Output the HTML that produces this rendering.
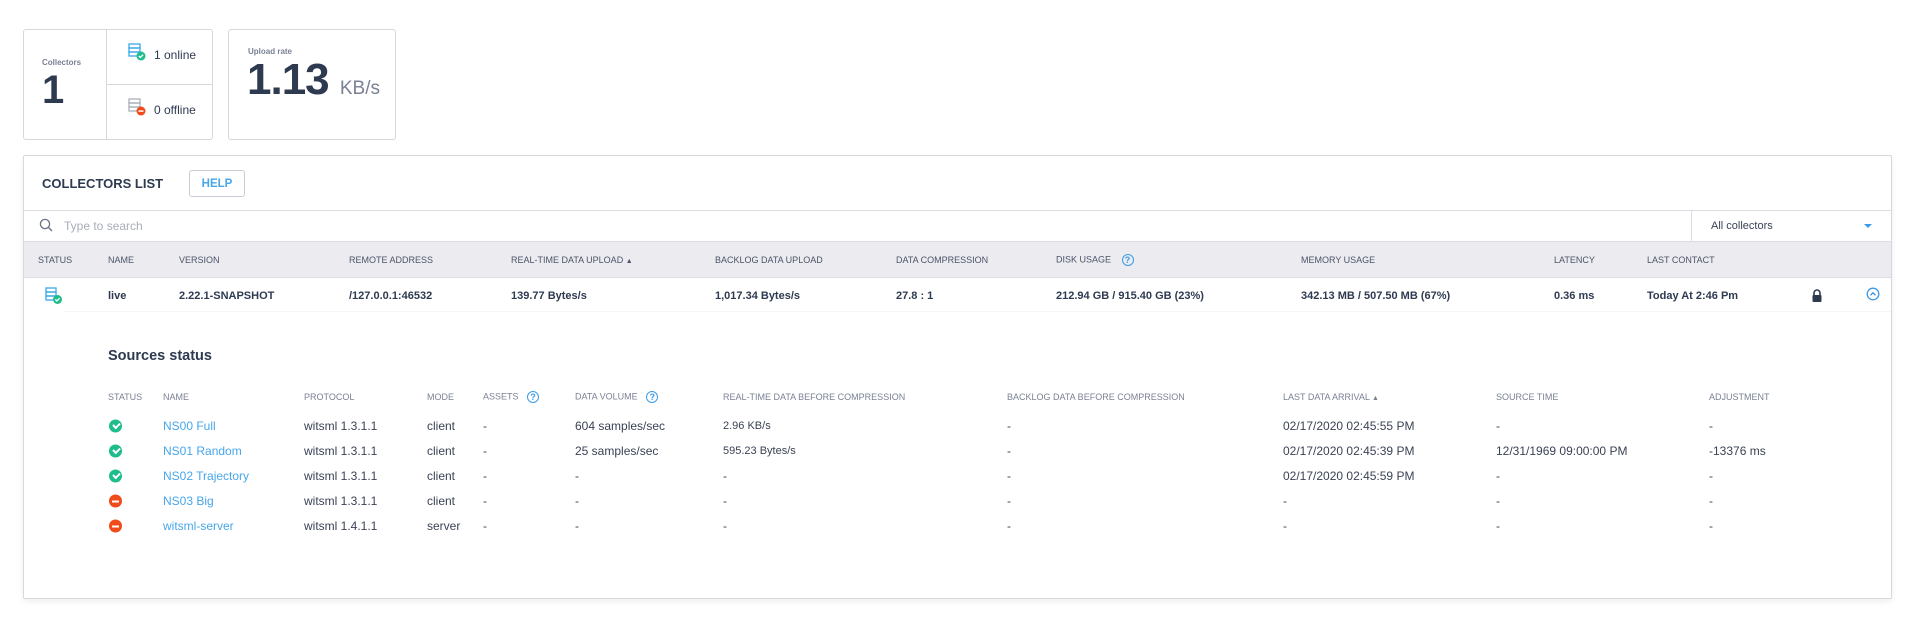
<!DOCTYPE html>
<html><head><meta charset="utf-8"><style>
*{box-sizing:border-box;margin:0;padding:0}
body{width:1909px;height:622px;background:#fff;font-family:"Liberation Sans",sans-serif;color:#2e3a50;position:relative;overflow:hidden}
.a{position:absolute;white-space:nowrap}
.box{position:absolute;border:1px solid #d6d8de;border-radius:3px;background:#fff}
.th{font-size:9px;color:#4b5468;transform:translateY(-50%)}
.td{font-size:11px;font-weight:bold;transform:translateY(-50%)}
.sh{font-size:9px;color:#7a8194;transform:translateY(-50%)}
.sd{font-size:12px;color:#3a4255;transform:translateY(-50%)}
.lk{color:#47a6ea}
.q{display:inline-block;width:12px;height:12px;border:1.3px solid #3d9be6;border-radius:50%;color:#3d9be6;font-size:9px;text-align:center;line-height:10px;font-weight:bold;vertical-align:middle;margin-left:8px}
.ok{width:13px;height:13px;border-radius:50%;background:#1fbd8c;transform:translateY(-50%)}
.ok:after{content:"";position:absolute;left:3.5px;top:3px;width:5px;height:3px;border-left:2px solid #fff;border-bottom:2px solid #fff;transform:rotate(-45deg)}
.no{width:13px;height:13px;border-radius:50%;background:#f04b1a;transform:translateY(-50%)}
.no:after{content:"";position:absolute;left:3px;top:5.5px;width:7px;height:2px;background:#fff}
</style></head><body>

<div class="box" style="left:23px;top:29px;width:190px;height:111px"></div>
<div class="a" style="left:106px;top:29px;width:1px;height:111px;background:#d6d8de"></div>
<div class="a" style="left:106px;top:84px;width:107px;height:1px;background:#d6d8de"></div>
<div class="a" style="left:42px;top:58px;font-size:8px;font-weight:bold;color:#7a8194">Collectors</div>
<div class="a" style="left:42px;top:69px;font-size:40px;font-weight:bold;line-height:42px">1</div>
<svg class="a" style="left:128px;top:43px" width="18" height="18" viewBox="0 0 18 18"><rect x="1" y="1" width="11" height="4" fill="none" stroke="#3aa9e8" stroke-width="1.3"/><rect x="1" y="5" width="11" height="4" fill="none" stroke="#3aa9e8" stroke-width="1.3"/><rect x="1" y="9" width="11" height="4" fill="none" stroke="#3aa9e8" stroke-width="1.3"/><circle cx="13" cy="13" r="4.5" fill="#1fbd8c"/><path d="M10.8 13l1.5 1.5 2.8-2.8" stroke="#fff" stroke-width="1.3" fill="none"/></svg>
<div class="a" style="left:154px;top:48px;font-size:12px">1 online</div>
<svg class="a" style="left:128px;top:98px" width="18" height="18" viewBox="0 0 18 18"><rect x="1" y="1" width="11" height="4" fill="none" stroke="#aab0bc" stroke-width="1.3"/><rect x="1" y="5" width="11" height="4" fill="none" stroke="#aab0bc" stroke-width="1.3"/><rect x="1" y="9" width="11" height="4" fill="none" stroke="#aab0bc" stroke-width="1.3"/><circle cx="13" cy="13" r="4.5" fill="#f04b1a"/><rect x="10.5" y="12.3" width="5" height="1.5" fill="#fff"/></svg>
<div class="a" style="left:154px;top:103px;font-size:12px">0 offline</div>

<div class="box" style="left:228px;top:29px;width:168px;height:111px"></div>
<div class="a" style="left:248px;top:47px;font-size:8px;font-weight:bold;color:#7a8194">Upload rate</div>
<div class="a" style="left:247px;top:57px;font-size:44px;font-weight:bold;line-height:46px;letter-spacing:-1px">1.13 <span style="font-size:19px;font-weight:normal;color:#7a8194;letter-spacing:0">KB/s</span></div>

<div class="box" style="left:23px;top:155px;width:1869px;height:444px;border-radius:2px;box-shadow:0 3px 6px rgba(0,0,0,.06)"></div>
<div class="a" style="left:42px;top:176px;font-size:13px;font-weight:bold">COLLECTORS LIST</div>
<div class="a" style="left:189px;top:170px;width:56px;height:27px;border:1px solid #c9ccd4;border-radius:3px;color:#47a6ea;font-size:11.5px;font-weight:bold;display:flex;align-items:center;justify-content:center">HELP</div>
<div class="a" style="left:24px;top:210px;width:1867px;height:1px;background:#dcdde2"></div>
<svg class="a" style="left:39px;top:218px" width="14" height="14" viewBox="0 0 14 14"><circle cx="6" cy="6" r="4.6" fill="none" stroke="#6b7385" stroke-width="1.3"/><path d="M9.4 9.4L13 13" stroke="#6b7385" stroke-width="1.4"/></svg>
<div class="a" style="left:64px;top:219px;font-size:12px;color:#a8adb8">Type to search</div>
<div class="a" style="left:1691px;top:210px;width:1px;height:31px;background:#dcdde2"></div>
<div class="a" style="left:1711px;top:220px;font-size:11px;color:#3a4255">All collectors</div>
<div class="a" style="left:1864px;top:224px;width:0;height:0;border-left:4px solid transparent;border-right:4px solid transparent;border-top:4px solid #3d9be6"></div>
<div class="a" style="left:24px;top:241px;width:1867px;height:37px;background:#ebebf0;border-top:1px solid #dcdde2;border-bottom:1px solid #dcdde2"></div>

<div class="a th" style="left:38px;top:260px">STATUS</div>
<div class="a th" style="left:108px;top:260px">NAME</div>
<div class="a th" style="left:179px;top:260px">VERSION</div>
<div class="a th" style="left:349px;top:260px">REMOTE ADDRESS</div>
<div class="a th" style="left:511px;top:260px">REAL-TIME DATA UPLOAD <span style="font-size:7px">▲</span></div>
<div class="a th" style="left:715px;top:260px">BACKLOG DATA UPLOAD</div>
<div class="a th" style="left:896px;top:260px">DATA COMPRESSION</div>
<div class="a th" style="left:1056px;top:260px">DISK USAGE <span class="q">?</span></div>
<div class="a th" style="left:1301px;top:260px">MEMORY USAGE</div>
<div class="a th" style="left:1554px;top:260px">LATENCY</div>
<div class="a th" style="left:1647px;top:260px">LAST CONTACT</div>

<svg class="a" style="left:45px;top:287px" width="18" height="18" viewBox="0 0 18 18"><rect x="1" y="1" width="10" height="4" fill="none" stroke="#3aa9e8" stroke-width="1.3"/><rect x="1" y="5" width="10" height="4" fill="none" stroke="#3aa9e8" stroke-width="1.3"/><rect x="1" y="9" width="10" height="4" fill="none" stroke="#3aa9e8" stroke-width="1.3"/><circle cx="12.5" cy="12.5" r="4.5" fill="#1fbd8c"/><path d="M10.3 12.5l1.5 1.5 2.8-2.8" stroke="#fff" stroke-width="1.3" fill="none"/></svg>
<div class="a td" style="left:108px;top:296px">live</div>
<div class="a td" style="left:179px;top:296px">2.22.1-SNAPSHOT</div>
<div class="a td" style="left:349px;top:296px">/127.0.0.1:46532</div>
<div class="a td" style="left:511px;top:296px">139.77 Bytes/s</div>
<div class="a td" style="left:715px;top:296px">1,017.34 Bytes/s</div>
<div class="a td" style="left:896px;top:296px">27.8 : 1</div>
<div class="a td" style="left:1056px;top:296px">212.94 GB / 915.40 GB (23%)</div>
<div class="a td" style="left:1301px;top:296px">342.13 MB / 507.50 MB (67%)</div>
<div class="a td" style="left:1554px;top:296px">0.36 ms</div>
<div class="a td" style="left:1647px;top:296px">Today At 2:46 Pm</div>
<svg class="a" style="left:1811px;top:289px" width="12" height="14" viewBox="0 0 12 14"><path d="M3 6V4a3 3 0 0 1 6 0v2" fill="none" stroke="#2e3a50" stroke-width="1.6"/><rect x="1.5" y="6" width="9" height="7" rx="1" fill="#2e3a50"/></svg>
<svg class="a" style="left:1866px;top:287px" width="14" height="14" viewBox="0 0 14 14"><circle cx="7" cy="7" r="5.8" fill="none" stroke="#3d9be6" stroke-width="1.3"/><path d="M4.5 8.3L7 5.8l2.5 2.5" fill="none" stroke="#3d9be6" stroke-width="1.4"/></svg>
<div class="a" style="left:64px;top:311px;width:1827px;height:1px;background:#f5f5f7"></div>

<div class="a" style="left:108px;top:348px;font-size:14.5px;font-weight:bold">Sources status</div>
<div class="a sh" style="left:108px;top:397px">STATUS</div>
<div class="a sh" style="left:163px;top:397px">NAME</div>
<div class="a sh" style="left:304px;top:397px">PROTOCOL</div>
<div class="a sh" style="left:427px;top:397px">MODE</div>
<div class="a sh" style="left:483px;top:397px">ASSETS <span class="q" style="margin-left:6px">?</span></div>
<div class="a sh" style="left:575px;top:397px">DATA VOLUME <span class="q" style="margin-left:6px">?</span></div>
<div class="a sh" style="left:723px;top:397px">REAL-TIME DATA BEFORE COMPRESSION</div>
<div class="a sh" style="left:1007px;top:397px">BACKLOG DATA BEFORE COMPRESSION</div>
<div class="a sh" style="left:1283px;top:397px">LAST DATA ARRIVAL <span style="font-size:7px">▲</span></div>
<div class="a sh" style="left:1496px;top:397px">SOURCE TIME</div>
<div class="a sh" style="left:1709px;top:397px">ADJUSTMENT</div>

<div class="a ok" style="left:109px;top:426px"></div>
<div class="a sd lk" style="left:163px;top:426px">NS00 Full</div>
<div class="a sd" style="left:304px;top:426px">witsml 1.3.1.1</div>
<div class="a sd" style="left:427px;top:426px">client</div>
<div class="a sd" style="left:483px;top:426px">-</div>
<div class="a sd" style="left:575px;top:426px">604 samples/sec</div>
<div class="a sd" style="left:723px;top:426px;font-size:11px">2.96 KB/s</div>
<div class="a sd" style="left:1007px;top:426px">-</div>
<div class="a sd" style="left:1283px;top:426px">02/17/2020 02:45:55 PM</div>
<div class="a sd" style="left:1496px;top:426px">-</div>
<div class="a sd" style="left:1709px;top:426px">-</div>

<div class="a ok" style="left:109px;top:451px"></div>
<div class="a sd lk" style="left:163px;top:451px">NS01 Random</div>
<div class="a sd" style="left:304px;top:451px">witsml 1.3.1.1</div>
<div class="a sd" style="left:427px;top:451px">client</div>
<div class="a sd" style="left:483px;top:451px">-</div>
<div class="a sd" style="left:575px;top:451px">25 samples/sec</div>
<div class="a sd" style="left:723px;top:451px;font-size:11px">595.23 Bytes/s</div>
<div class="a sd" style="left:1007px;top:451px">-</div>
<div class="a sd" style="left:1283px;top:451px">02/17/2020 02:45:39 PM</div>
<div class="a sd" style="left:1496px;top:451px">12/31/1969 09:00:00 PM</div>
<div class="a sd" style="left:1709px;top:451px">-13376 ms</div>

<div class="a ok" style="left:109px;top:476px"></div>
<div class="a sd lk" style="left:163px;top:476px">NS02 Trajectory</div>
<div class="a sd" style="left:304px;top:476px">witsml 1.3.1.1</div>
<div class="a sd" style="left:427px;top:476px">client</div>
<div class="a sd" style="left:483px;top:476px">-</div>
<div class="a sd" style="left:575px;top:476px">-</div>
<div class="a sd" style="left:723px;top:476px">-</div>
<div class="a sd" style="left:1007px;top:476px">-</div>
<div class="a sd" style="left:1283px;top:476px">02/17/2020 02:45:59 PM</div>
<div class="a sd" style="left:1496px;top:476px">-</div>
<div class="a sd" style="left:1709px;top:476px">-</div>

<div class="a no" style="left:109px;top:501px"></div>
<div class="a sd lk" style="left:163px;top:501px">NS03 Big</div>
<div class="a sd" style="left:304px;top:501px">witsml 1.3.1.1</div>
<div class="a sd" style="left:427px;top:501px">client</div>
<div class="a sd" style="left:483px;top:501px">-</div>
<div class="a sd" style="left:575px;top:501px">-</div>
<div class="a sd" style="left:723px;top:501px">-</div>
<div class="a sd" style="left:1007px;top:501px">-</div>
<div class="a sd" style="left:1283px;top:501px">-</div>
<div class="a sd" style="left:1496px;top:501px">-</div>
<div class="a sd" style="left:1709px;top:501px">-</div>

<div class="a no" style="left:109px;top:526px"></div>
<div class="a sd lk" style="left:163px;top:526px">witsml-server</div>
<div class="a sd" style="left:304px;top:526px">witsml 1.4.1.1</div>
<div class="a sd" style="left:427px;top:526px">server</div>
<div class="a sd" style="left:483px;top:526px">-</div>
<div class="a sd" style="left:575px;top:526px">-</div>
<div class="a sd" style="left:723px;top:526px">-</div>
<div class="a sd" style="left:1007px;top:526px">-</div>
<div class="a sd" style="left:1283px;top:526px">-</div>
<div class="a sd" style="left:1496px;top:526px">-</div>
<div class="a sd" style="left:1709px;top:526px">-</div>
</body></html>
